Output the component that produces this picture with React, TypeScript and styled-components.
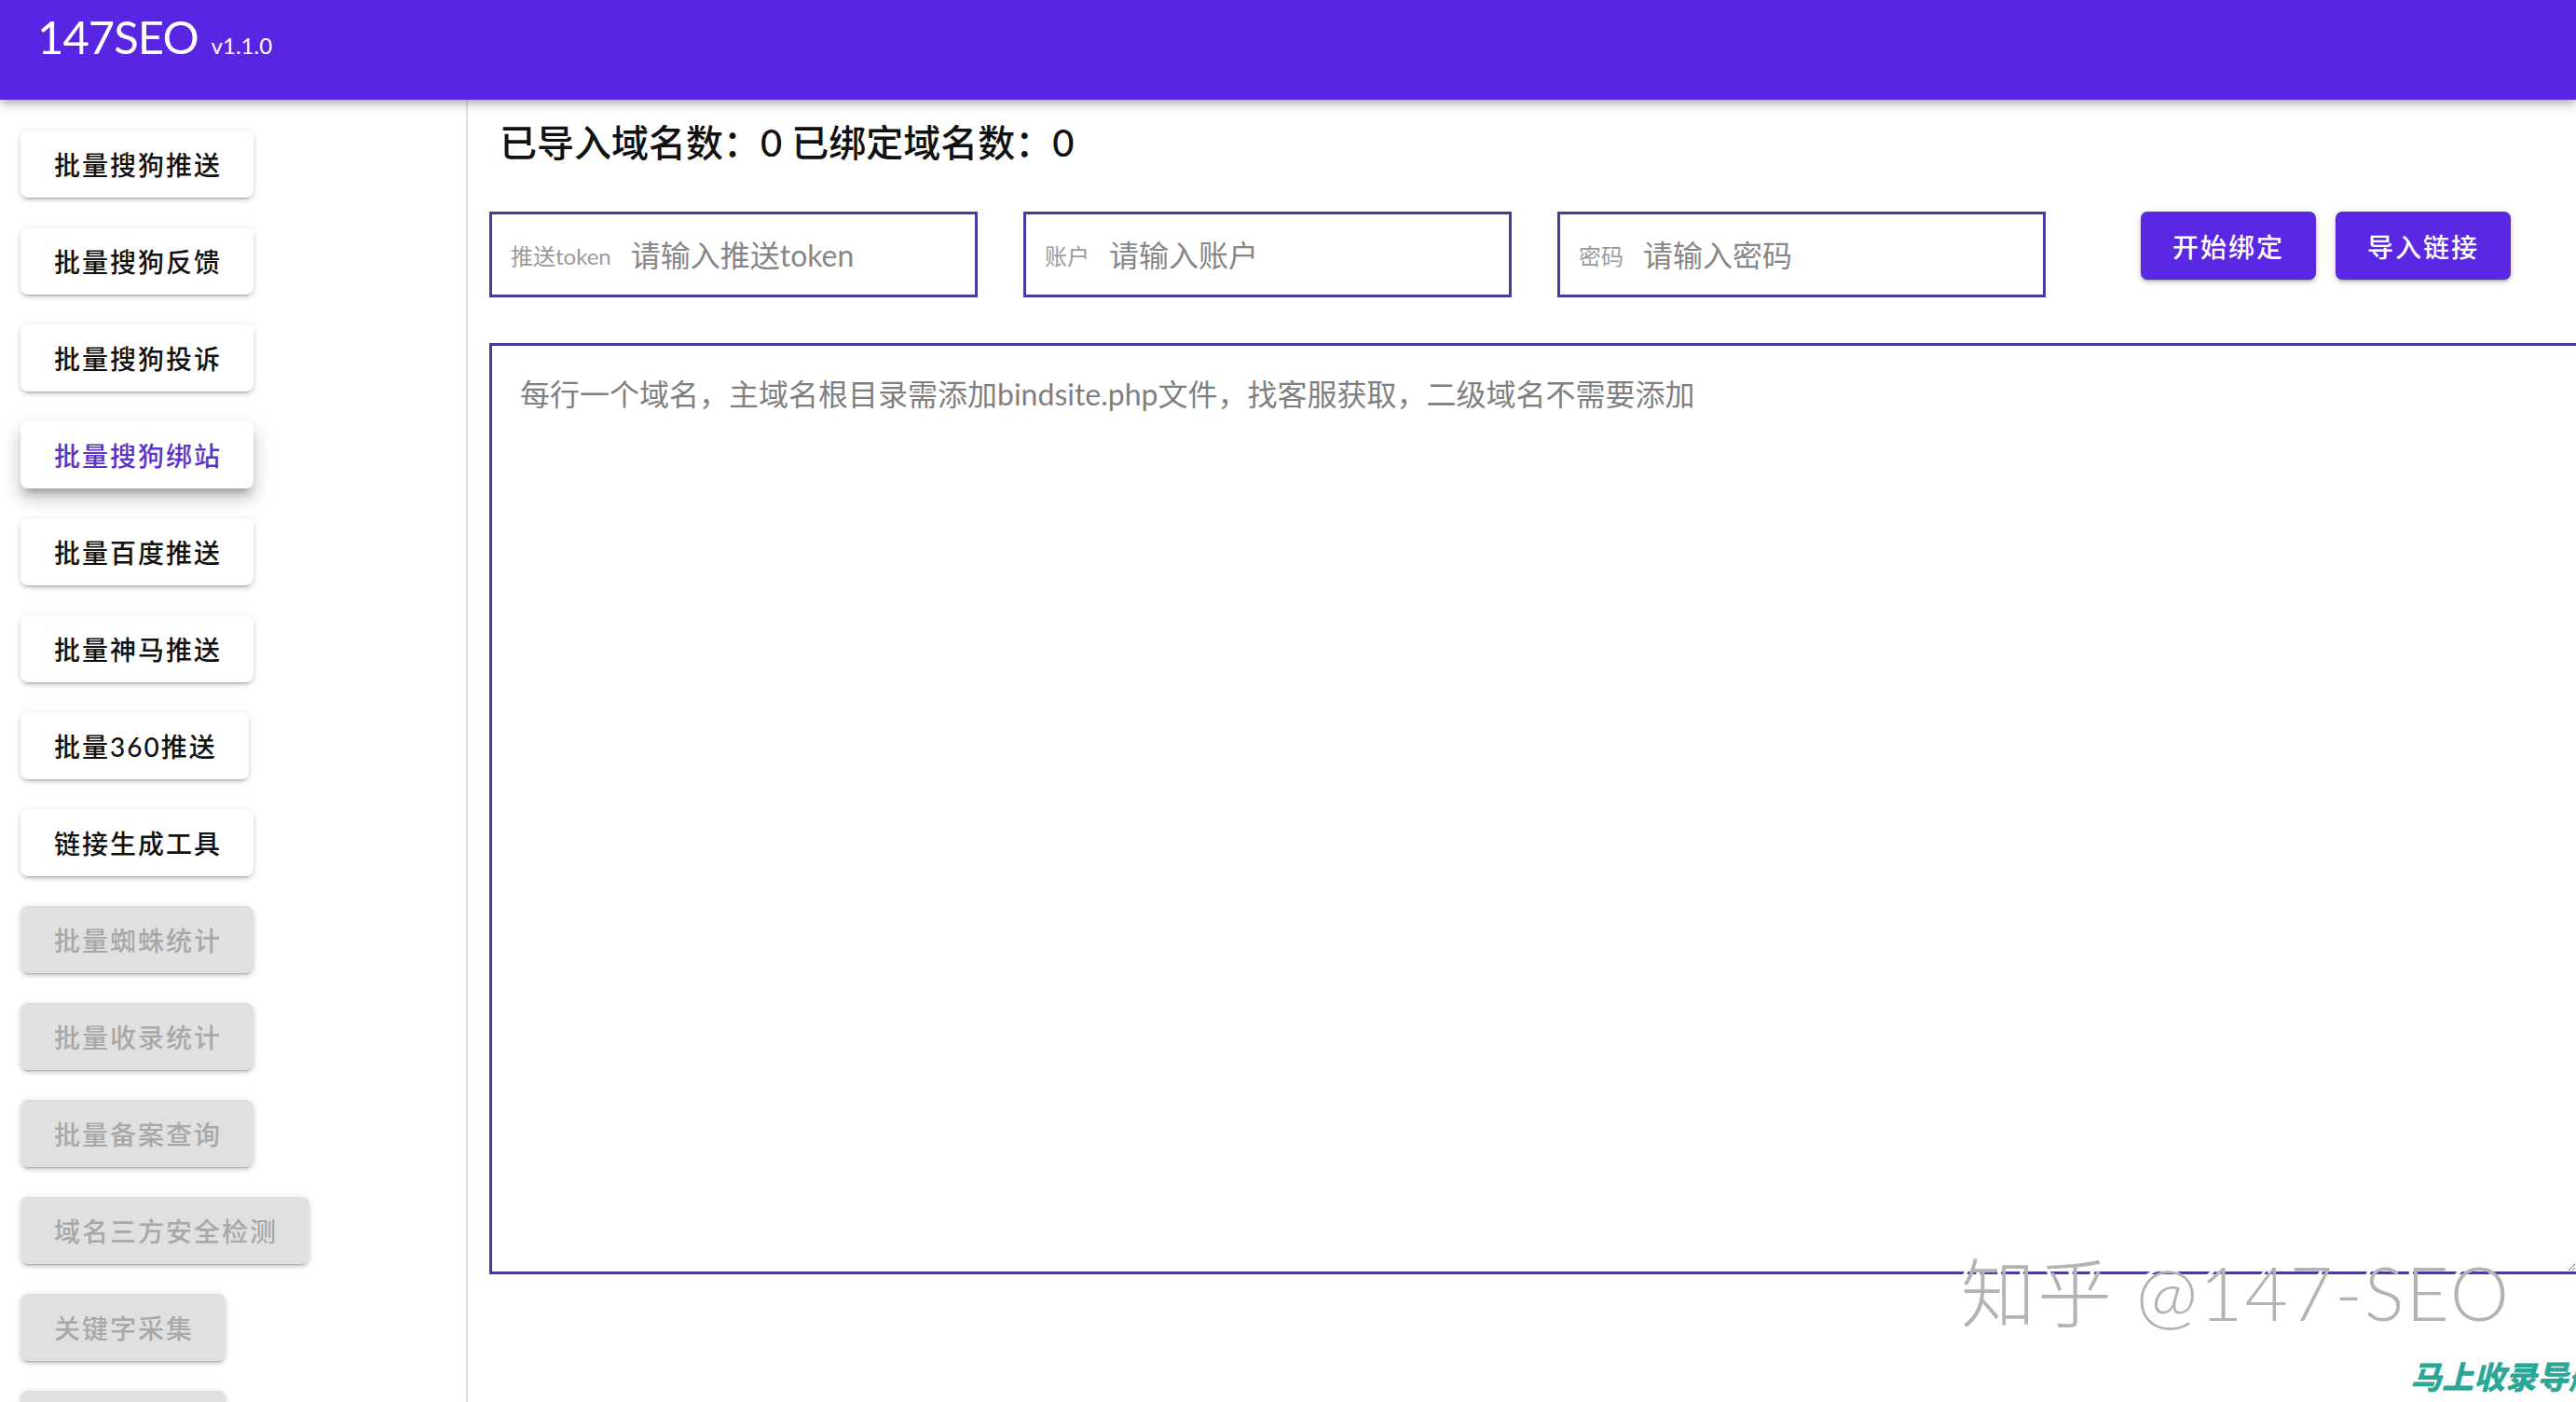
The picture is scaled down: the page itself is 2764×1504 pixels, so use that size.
import styled, { createGlobalStyle } from 'styled-components';

const GlobalStyle = createGlobalStyle`
  html, body {
    margin: 0;
    padding: 0;
    background: #fff;
    overflow: hidden;
  }
  body {
    font-family: Lato, "Noto Sans CJK SC", sans-serif;
  }
`;

type NavItem = { label: string; state?: 'active' | 'disabled' };

const navItems: NavItem[] = [
  { label: '批量搜狗推送' },
  { label: '批量搜狗反馈' },
  { label: '批量搜狗投诉' },
  { label: '批量搜狗绑站', state: 'active' },
  { label: '批量百度推送' },
  { label: '批量神马推送' },
  { label: '批量360推送' },
  { label: '链接生成工具' },
  { label: '批量蜘蛛统计', state: 'disabled' },
  { label: '批量收录统计', state: 'disabled' },
  { label: '批量备案查询', state: 'disabled' },
  { label: '域名三方安全检测', state: 'disabled' },
  { label: '关键字采集', state: 'disabled' },
  { label: '长尾词挖掘', state: 'disabled' },
];

const fields = [
  { label: '推送token', placeholder: '请输入推送token' },
  { label: '账户', placeholder: '请输入账户' },
  { label: '密码', placeholder: '请输入密码' },
];

export default function App() {
  return (
    <>
      <GlobalStyle />
      <Page>
        <Header>
          <Brand>147SEO</Brand>
          <Version>v1.1.0</Version>
        </Header>

        <Body>
          <Sidebar>
            {navItems.map((item) => (
              <NavButton key={item.label} $state={item.state}>
                {item.label}
              </NavButton>
            ))}
          </Sidebar>

          <Main>
            <Stats>已导入域名数：0 已绑定域名数：0</Stats>

            <FormRow>
              {fields.map((f) => (
                <InputBox key={f.label}>
                  <Adornment>{f.label}</Adornment>
                  <Field placeholder={f.placeholder} />
                </InputBox>
              ))}
              <Actions>
                <PrimaryButton>开始绑定</PrimaryButton>
                <PrimaryButton>导入链接</PrimaryButton>
              </Actions>
            </FormRow>

            <DomainArea placeholder="每行一个域名，主域名根目录需添加bindsite.php文件，找客服获取，二级域名不需要添加" />
          </Main>
        </Body>

        <Watermark>知乎 @147-SEO</Watermark>
        <Stamp>马上收录导航</Stamp>
      </Page>
    </>
  );
}

const Page = styled.div`
  position: relative;
  height: 100vh;
  overflow: hidden;
  display: flex;
  flex-direction: column;
`;

const Header = styled.header`
  flex: none;
  height: 107px;
  box-sizing: border-box;
  padding: 9px 40px 0;
  display: flex;
  align-items: baseline;
  gap: 14px;
  background: #5826e2;
  color: #fff;
  box-shadow: 0 4px 8px -2px rgba(0, 0, 0, 0.25), 0 7px 10px 1px rgba(0, 0, 0, 0.12);
  position: relative;
  z-index: 2;
`;

const Brand = styled.span`
  font-family: Lato, sans-serif;
  font-size: 49px;
  font-weight: 400;
  line-height: 60px;
  letter-spacing: -1px;
`;

const Version = styled.span`
  font-family: Lato, sans-serif;
  font-size: 24px;
  font-weight: 400;
`;

const Body = styled.div`
  flex: 1;
  display: flex;
  min-height: 0;
`;

const Sidebar = styled.nav`
  flex: none;
  width: 502px;
  box-sizing: border-box;
  border-right: 2px solid #e2e2e2;
  padding: 33px 0 0 22px;
  display: flex;
  flex-direction: column;
  align-items: flex-start;
  gap: 32px;
`;

const NavButton = styled.button<{ $state?: 'active' | 'disabled' }>`
  flex: none;
  height: 72px;
  padding: 0 34px 0 36px;
  border: none;
  border-radius: 8px;
  font-family: Lato, "Noto Sans CJK SC", sans-serif;
  font-size: 28px;
  font-weight: 500;
  letter-spacing: 2px;
  cursor: pointer;
  background: ${(p) => (p.$state === 'disabled' ? '#e0e0e0' : '#fff')};
  color: ${(p) =>
    p.$state === 'active' ? '#5a34c9' : p.$state === 'disabled' ? '#a8a8a8' : '#111'};
  box-shadow: ${(p) =>
    p.$state === 'active'
      ? '0 8px 9px -5px rgba(0,0,0,0.3), 0 12px 16px 2px rgba(0,0,0,0.12), 0 5px 22px 4px rgba(0,0,0,0.08)'
      : '0 4px 2px -3px rgba(0,0,0,0.22), 0 3px 4px 0 rgba(0,0,0,0.12), 0 1px 8px 0 rgba(0,0,0,0.1)'};
`;

const Main = styled.main`
  flex: 1;
  min-width: 0;
  padding: 22px 0 0 23px;
  display: flex;
  flex-direction: column;
`;

const Stats = styled.h2`
  margin: 0 0 50px 11px;
  font-family: Lato, "Noto Sans CJK SC", sans-serif;
  font-size: 40px;
  font-weight: 500;
  line-height: 48px;
  color: #111;
`;

const FormRow = styled.div`
  display: flex;
  align-items: flex-start;
  gap: 49px;
`;

const InputBox = styled.label`
  flex: none;
  width: 524px;
  height: 92px;
  box-sizing: border-box;
  border: 3px solid #4b3a9e;
  padding: 0 17px 0 20px;
  display: flex;
  align-items: center;
  gap: 21px;
  background: #fff;
`;

const Adornment = styled.span`
  flex: none;
  font-family: Lato, "Noto Sans CJK SC", sans-serif;
  font-size: 24px;
  color: #9a9a9a;
`;

const Field = styled.input`
  flex: 1;
  min-width: 0;
  border: none;
  outline: none;
  background: transparent;
  font-family: Lato, "Noto Sans CJK SC", sans-serif;
  font-size: 32px;
  color: #333;
  padding: 0;

  &::placeholder {
    color: #868686;
  }
`;

const Actions = styled.div`
  display: flex;
  gap: 21px;
  margin-left: 53px;
`;

const PrimaryButton = styled.button`
  height: 73px;
  width: 188px;
  border: none;
  border-radius: 7px;
  background: #5a28e2;
  color: #fff;
  font-family: Lato, "Noto Sans CJK SC", sans-serif;
  font-size: 28px;
  font-weight: 500;
  letter-spacing: 2px;
  cursor: pointer;
  box-shadow: 0 4px 2px -3px rgba(0,0,0,0.22), 0 3px 4px 0 rgba(0,0,0,0.14), 0 1px 8px 0 rgba(0,0,0,0.12);
`;

const DomainArea = styled.textarea`
  margin-top: 49px;
  width: calc(100% + 3px);
  height: 999px;
  box-sizing: border-box;
  border: 3px solid #4b3a9e;
  padding: 33px 30px;
  outline: none;
  resize: both;
  font-family: Lato, "Noto Sans CJK SC", sans-serif;
  font-size: 32px;
  line-height: 38px;
  color: #333;

  &::placeholder {
    color: #7f7f7f;
  }
`;

const Watermark = styled.div`
  position: absolute;
  left: 2104px;
  top: 1338px;
  font-family: Lato, "Noto Sans CJK SC", sans-serif;
  font-size: 80px;
  font-weight: 300;
  line-height: 1.2;
  letter-spacing: 2px;
  color: #b3b3b3;
  text-shadow: -5px -3px 0 #fff;
  pointer-events: none;
  white-space: nowrap;
`;

const Stamp = styled.div`
  position: absolute;
  left: 2586px;
  top: 1456px;
  font-family: "Noto Sans CJK SC", sans-serif;
  font-size: 34px;
  font-weight: 900;
  font-style: italic;
  line-height: 1.2;
  color: #2aa797;
  white-space: nowrap;
  pointer-events: none;
`;
